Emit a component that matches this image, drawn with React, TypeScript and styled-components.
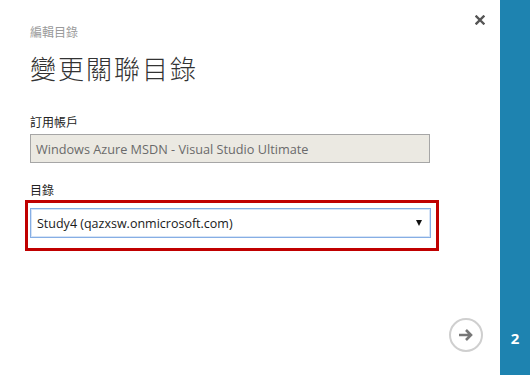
import React from 'react'
import styled, { createGlobalStyle } from 'styled-components'

const GlobalStyle = createGlobalStyle`
  html, body {
    margin: 0;
    padding: 0;
    background: #ffffff;
  }
  body {
    font-family: 'Open Sans', 'Noto Sans CJK TC', sans-serif;
    color: #222;
  }
`

const StyledFrame = styled.div`
  display: flex;
  width: 530px;
  height: 375px;
  overflow: hidden;
`

const StyledDialog = styled.div`
  position: relative;
  width: 500px;
  min-width: 0;
  flex-shrink: 0;
  box-sizing: border-box;
  display: flex;
  flex-direction: column;
  padding: 23px 70px 0 30px;
`

const StyledClose = styled.button`
  position: absolute;
  top: 14px;
  right: 14px;
  width: 12px;
  height: 12px;
  padding: 0;
  border: none;
  background: transparent;
  display: flex;
  align-items: center;
  justify-content: center;
`

const StyledSubtitle = styled.div`
  font-size: 12px;
  line-height: 18px;
  color: #9a9a9a;
  font-family: 'Noto Sans CJK TC', sans-serif;
`

const StyledTitle = styled.h1`
  margin: 11px 0 0;
  font-size: 26px;
  line-height: 32px;
  font-weight: 300;
  letter-spacing: 2px;
  color: #333;
  font-family: 'Noto Sans CJK TC', sans-serif;
`

const StyledLabel = styled.div<{ $top: number }>`
  margin-top: ${(p) => p.$top}px;
  font-size: 12px;
  line-height: 16px;
  color: #222;
  font-family: 'Noto Sans CJK TC', sans-serif;
`

const StyledReadonly = styled.div`
  margin-top: 4px;
  width: 400px;
  height: 29px;
  box-sizing: border-box;
  border: 1px solid #a6a6a6;
  background: #ebe9e2;
  padding: 0 5px;
  display: flex;
  align-items: center;
  font-size: 12.7px;
  color: #6a6a6a;
`

const StyledHighlight = styled.div`
  margin: 2px 0 0 -5px;
  width: 414px;
  box-sizing: border-box;
  border: 3px solid #c00000;
  padding: 5px 5px 10px 2px;
`

const StyledSelect = styled.div`
  height: 30px;
  box-sizing: border-box;
  border: 1px solid #86aee4;
  box-shadow: inset 0 0 0 1px #d6e4f7;
  background: #fff;
  padding: 0 8px 0 6px;
  display: flex;
  align-items: center;
  justify-content: space-between;
  font-size: 12.5px;
  color: #1a1a1a;
`

const StyledCaret = styled.span`
  width: 0;
  height: 0;
  border-left: 3.5px solid transparent;
  border-right: 3.5px solid transparent;
  border-top: 6px solid #111;
`

const StyledFooter = styled.div`
  margin-top: auto;
  display: flex;
  justify-content: flex-end;
  padding: 0 0 23px;
  margin-right: -53px;
`

const StyledNext = styled.button`
  width: 34px;
  height: 34px;
  box-sizing: border-box;
  border-radius: 50%;
  border: 2px solid #cfcfcf;
  background: #fff;
  padding: 0;
  display: flex;
  align-items: center;
  justify-content: center;
`

const StyledRail = styled.div`
  width: 30px;
  flex-shrink: 0;
  background: #1e83b0;
  display: flex;
  flex-direction: column;
  justify-content: flex-end;
  align-items: center;
  padding-bottom: 27px;
  box-sizing: border-box;
`

const StyledStep = styled.span`
  font-family: 'Open Sans', sans-serif;
  font-weight: 700;
  font-size: 15px;
  color: #fff;
`

const App: React.FC = () => {
  return (
    <>
      <GlobalStyle />
      <StyledFrame>
        <StyledDialog>
          <StyledClose aria-label="close">
            <svg width="10" height="10" viewBox="0 0 10 10">
              <path d="M1.5 1.5 L8.5 8.5 M8.5 1.5 L1.5 8.5" stroke="#555" strokeWidth="2.4" strokeLinecap="square" />
            </svg>
          </StyledClose>
          <StyledSubtitle>編輯目錄</StyledSubtitle>
          <StyledTitle>變更關聯目錄</StyledTitle>
          <StyledLabel $top={30}>訂用帳戶</StyledLabel>
          <StyledReadonly>Windows Azure MSDN - Visual Studio Ultimate</StyledReadonly>
          <StyledLabel $top={19}>目錄</StyledLabel>
          <StyledHighlight>
            <StyledSelect>
              <span>Study4 (qazxsw.onmicrosoft.com)</span>
              <StyledCaret />
            </StyledSelect>
          </StyledHighlight>
          <StyledFooter>
            <StyledNext aria-label="next">
              <svg width="16" height="14" viewBox="0 0 16 14">
                <path d="M1 7 H13 M8 2 L13 7 L8 12" stroke="#777" strokeWidth="2.6" fill="none" />
              </svg>
            </StyledNext>
          </StyledFooter>
        </StyledDialog>
        <StyledRail>
          <StyledStep>2</StyledStep>
        </StyledRail>
      </StyledFrame>
    </>
  )
}

export default App
